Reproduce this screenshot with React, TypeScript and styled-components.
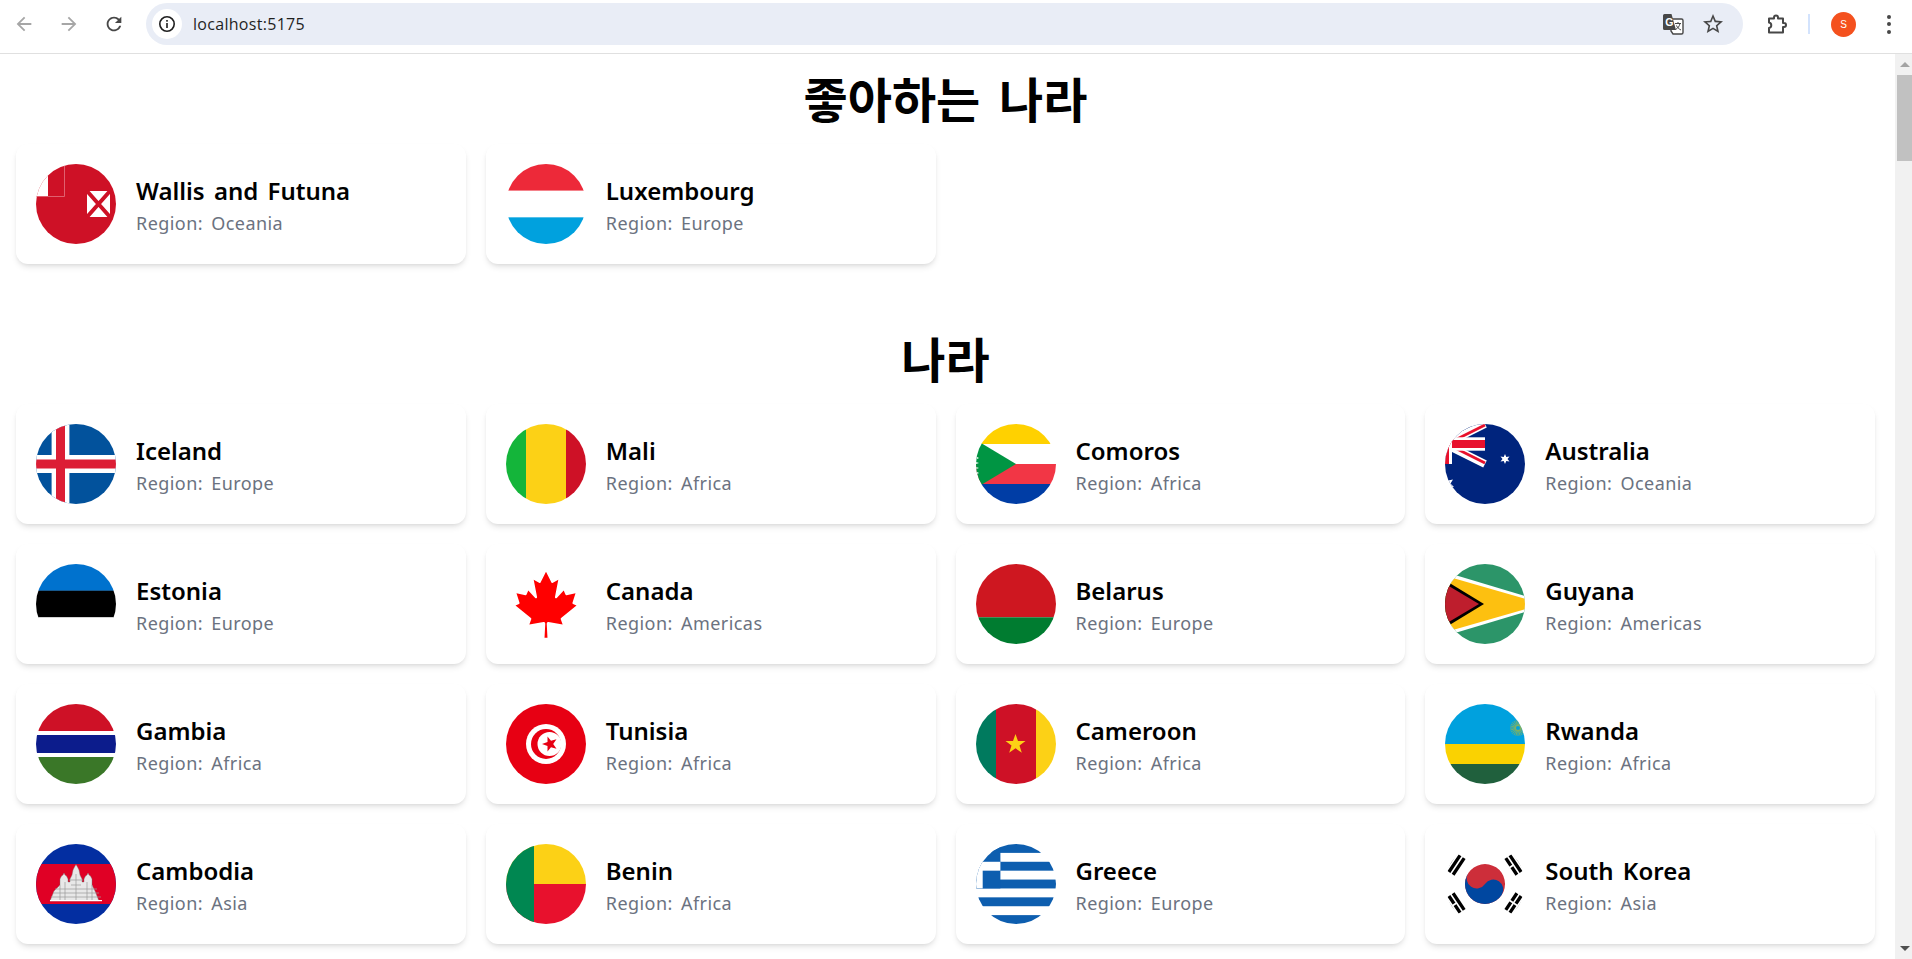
import { ReactNode } from "react";
import styled, { createGlobalStyle } from "styled-components";

const GlobalStyle = createGlobalStyle`
    html, body {
        margin: 0;
        height: 100%;
        overflow: hidden;
        background: #fff;
    }
`;

const Window = styled.div`
    display: flex;
    flex-direction: column;
    height: 959px;
    overflow: hidden;
`;

const Toolbar = styled.div`
    display: flex;
    align-items: center;
    height: 48px;
    flex-shrink: 0;
    padding: 0 0 5px 1px;
    background: #fff;
    border-bottom: 1px solid #e0e0e0;
`;

const NavButton = styled.div`
    display: flex;
    align-items: center;
    justify-content: center;
    width: 45px;
    height: 48px;
`;

const Omnibox = styled.div`
    display: flex;
    align-items: center;
    width: 1597px;
    height: 42px;
    margin-left: 10px;
    padding-left: 6px;
    box-sizing: border-box;
    border-radius: 21px;
    background: #e9edf6;
`;

const InfoBadge = styled.div`
    display: flex;
    align-items: center;
    justify-content: center;
    width: 30px;
    height: 30px;
    border-radius: 50%;
    background: #fff;
`;

const Url = styled.span`
    flex: 1;
    margin-left: 11px;
    font-family: "Open Sans", sans-serif;
    font-size: 16px;
    letter-spacing: 0.3px;
    color: #1f1f1f;
`;

const OmniAction = styled.div`
    display: flex;
    align-items: center;
    justify-content: center;
    width: 40px;
    height: 40px;
`;

const OmniEnd = styled.div`
    width: 10px;
`;

const ExtensionButton = styled.div`
    display: flex;
    align-items: center;
    justify-content: center;
    width: 40px;
    margin-left: 14px;
`;

const Divider = styled.div`
    width: 2px;
    height: 20px;
    margin-left: 11px;
    background: #d3e3fd;
`;

const Avatar = styled.div`
    display: flex;
    align-items: center;
    justify-content: center;
    width: 25px;
    height: 25px;
    margin-left: 21px;
    border-radius: 50%;
    background: #f4511e;
    color: #fff;
    font-family: "Liberation Sans", sans-serif;
    font-size: 10px;
`;

const Kebab = styled.div`
    display: flex;
    flex-direction: column;
    gap: 3.5px;
    margin-left: 31px;
`;

const KebabDot = styled.span`
    width: 4px;
    height: 4px;
    border-radius: 50%;
    background: #474747;
`;

const Viewport = styled.div`
    display: flex;
    flex: 1;
    min-height: 0;
`;

const Page = styled.main`
    flex: 1;
    min-width: 0;
    padding: 7px 20px 0 16px;
    overflow: hidden;
    font-family: "Noto Sans", "Noto Sans CJK KR", sans-serif;
`;

const Section = styled.section`
    margin-bottom: 57px;
`;

const Title = styled.h1`
    margin: 0 0 11px;
    font-family: "Noto Sans CJK KR", sans-serif;
    font-size: 48px;
    line-height: 72px;
    font-weight: 700;
    word-spacing: 8px;
    text-align: center;
    color: #000;
`;

const Grid = styled.div`
    display: grid;
    grid-template-columns: repeat(4, 1fr);
    gap: 20px;
`;

const Card = styled.article`
    display: flex;
    align-items: center;
    gap: 20px;
    height: 120px;
    padding: 0 20px;
    box-sizing: border-box;
    border-radius: 12px;
    background: #fff;
    box-shadow: 0 4px 6px -1px rgba(0, 0, 0, 0.1), 0 2px 4px -2px rgba(0, 0, 0, 0.1);
`;

const FlagCircle = styled.div`
    width: 80px;
    height: 80px;
    flex-shrink: 0;
    border-radius: 50%;
    overflow: hidden;

    svg {
        display: block;
        width: 80px;
        height: 80px;
    }
`;

const CardText = styled.div`
    padding-top: 3px;
`;

const Name = styled.h2`
    margin: 0;
    font-size: 24px;
    line-height: 32px;
    font-weight: 600;
    word-spacing: 3px;
    color: #000;
`;

const Region = styled.p`
    margin: 2px 0 0;
    font-size: 18px;
    line-height: 28px;
    letter-spacing: 0.45px;
    word-spacing: 3px;
    color: #6b7280;
`;

const Scrollbar = styled.div`
    display: flex;
    flex-direction: column;
    align-items: flex-end;
    width: 17px;
    flex-shrink: 0;
    background: #f1f1f1;
`;

const ScrollArrow = styled.div<{ $down?: boolean; $color: string }>`
    display: flex;
    align-items: center;
    justify-content: center;
    width: 15px;
    height: 21px;

    &::before {
        content: "";
        border-left: 5px solid transparent;
        border-right: 5px solid transparent;
        ${props => props.$down ? `border-top: 5px solid ${props.$color};` : `border-bottom: 5px solid ${props.$color};`}
    }
`;

const ScrollThumb = styled.div`
    width: 15px;
    height: 86px;
    background: #c1c1c1;
`;

const ScrollTrack = styled.div`
    flex: 1;
`;

function Icon({ d, color, size }: { d: string; color: string; size: number }) {
    return <svg width={size} height={size} viewBox="0 0 24 24" fill={color}><path d={d} /></svg>;
}

const TranslateIcon = () => (
    <svg width="22" height="22" viewBox="0 0 22 22">
        <path d="M9 6h10.500a1.500 1.500 0 0 1 1.500 1.500v12a1.500 1.500 0 0 1-1.500 1.500H11l-2-3z" fill="#fff" stroke="#474747" strokeWidth="1.400" />
        <path d="M2.500 1h7l4.500 16H2.500A1.500 1.500 0 0 1 1 15.500v-13A1.500 1.500 0 0 1 2.500 1z" fill="#474747" />
        <text x="3.200" y="13" fontFamily="Liberation Sans, sans-serif" fontWeight="700" fontSize="10.500" fill="#fff">G</text>
        <path d="M13 10.500h6M16 9v1.500M18 10.500c-.6 3-2.400 5-4.500 6M14.500 12.500c.8 2 2.400 3.500 4.500 4.500" fill="none" stroke="#474747" strokeWidth="1" />
    </svg>
);

const PuzzleIcon = () => (
    <svg width="24" height="24" viewBox="0 0 24 24">
        <path d="M4 6.500h5v-1a2 2 0 0 1 4 0v1h5v4.500h1a2 2 0 0 1 0 4h-1v5.500H4v-4.500a2.800 2.800 0 0 0 0-5.500z" fill="none" stroke="#474747" strokeWidth="2" strokeLinejoin="round" />
    </svg>
);

const WallisFlag = () => (
    <svg viewBox="0 0 80 80">
        <rect width="80" height="80" fill="#ce1126" />
        <rect width="12" height="32" fill="#fff" />
        <path d="M0 32.500h28.500V0" fill="none" stroke="#e0606f" strokeWidth="1" />
        <rect x="51" y="27" width="23" height="26" fill="#fff" />
        <path d="M51 27l23 26M74 27L51 53" stroke="#ce1126" strokeWidth="4" />
    </svg>
);

const HorizontalFlag = ({ colors }: { colors: string[] }) => (
    <svg viewBox="0 0 80 80">
        {colors.map((color, i) => (
            <rect key={i} y={(80 / colors.length) * i} width="80" height={80 / colors.length + 0.2} fill={color} />
        ))}
    </svg>
);

const BelarusFlag = () => (
    <svg viewBox="0 0 80 80">
        <rect width="80" height="53.300" fill="#ce1720" />
        <rect y="53.300" width="80" height="26.700" fill="#007c30" />
    </svg>
);

const VerticalFlag = ({ colors }: { colors: string[] }) => (
    <svg viewBox="0 0 80 80">
        <rect width="20" height="80" fill={colors[0]} />
        <rect x="20" width="40" height="80" fill={colors[1]} />
        <rect x="60" width="20" height="80" fill={colors[2]} />
        {colors[3] && <polygon points="39.500,30 42,37 49.500,37 43.500,41.500 45.800,48.800 39.500,44.300 33.200,48.800 35.500,41.500 29.500,37 37,37" fill={colors[3]} />}
    </svg>
);

const IcelandFlag = () => (
    <svg viewBox="0 0 80 80">
        <rect width="80" height="80" fill="#02529c" />
        <rect y="31" width="80" height="18" fill="#fff" />
        <rect x="15.600" width="17.800" height="80" fill="#fff" />
        <rect y="35.500" width="80" height="9" fill="#dc1e35" />
        <rect x="20" width="9" height="80" fill="#dc1e35" />
    </svg>
);

const ComorosFlag = () => (
    <svg viewBox="0 0 80 80">
        <rect width="80" height="20" fill="#ffd100" />
        <rect y="20" width="80" height="20" fill="#fff" />
        <rect y="40" width="80" height="20" fill="#f23645" />
        <rect y="60" width="80" height="20" fill="#003da5" />
        <polygon points="-26.700,0 40,40 -26.700,80" fill="#009543" />
        <path d="M1 33l2 1-2 1zM0 38l3 1-3 1zM0 43l3 1-3 1zM1 48l2 1-2 1z" fill="#fff" />
    </svg>
);

const AustraliaFlag = () => (
    <svg viewBox="0 0 80 80">
        <rect width="80" height="80" fill="#00247d" />
        <path d="M0 20L40 0M0 20l40 20" stroke="#fff" strokeWidth="8" />
        <path d="M0 21L40 1M0 19l40 20" stroke="#e8112d" strokeWidth="2.800" />
        <rect y="13.300" width="40" height="13.400" fill="#fff" />
        <rect y="16" width="40" height="8" fill="#e8112d" />
        <rect x="-7" width="14" height="40" fill="#fff" />
        <rect x="-4" width="8" height="40" fill="#e8112d" />
        <polygon points="60,30 61.300,33 64.500,32.500 62.500,35 64.500,37.600 61.300,37 60,40 58.700,37 55.500,37.600 57.500,35 55.500,32.500 58.700,33" fill="#fff" />
        <polygon points="1,52 3,56.500 8,55.500 5.500,59.500 9,63 4,63.500 3,68 0,65 -3,60" fill="#fff" />
    </svg>
);

const CanadaFlag = () => (
    <svg viewBox="0 0 80 80">
        <rect width="80" height="80" fill="#fff" />
        <path
            transform="translate(40 40.500) scale(0.0164)"
            fill="#f00"
            d="m-90 2030 45-863a95 95 0 0 0-111-98l-859 151 116-320a65 65 0 0 0-20-73l-941-762 212-99a65 65 0 0 0 34-79l-186-572 542 115a65 65 0 0 0 73-38l105-247 423 454a65 65 0 0 0 111-57l-204-1052 327 189a65 65 0 0 0 91-27l332-652 332 652a65 65 0 0 0 91 27l327-189-204 1052a65 65 0 0 0 111 57l423-454 105 247a65 65 0 0 0 73 38l542-115-186 572a65 65 0 0 0 34 79l212 99-941 762a65 65 0 0 0-20 73l116 320-859-151a95 95 0 0 0-111 98l45 863z"
        />
    </svg>
);

const GuyanaFlag = () => (
    <svg viewBox="0 0 80 80">
        <rect width="80" height="80" fill="#2c9569" />
        <polygon points="-26.700,0 106.700,40 -26.700,80" fill="#fff" />
        <polygon points="-26.700,4 98,40 -26.700,76" fill="#fdc010" />
        <polygon points="-26.700,0 39,40 -26.700,80" fill="#000" />
        <polygon points="-26.700,4 34,40 -26.700,76" fill="#be1e2d" />
    </svg>
);

const GambiaFlag = () => (
    <svg viewBox="0 0 80 80">
        <rect width="80" height="27" fill="#ce1126" />
        <rect y="27" width="80" height="4" fill="#fff" />
        <rect y="31" width="80" height="18" fill="#0c1c8c" />
        <rect y="49" width="80" height="4" fill="#fff" />
        <rect y="53" width="80" height="27" fill="#3a7728" />
    </svg>
);

const TunisiaFlag = () => (
    <svg viewBox="0 0 80 80">
        <rect width="80" height="80" fill="#e70013" />
        <circle cx="40" cy="40" r="20" fill="#fff" />
        <circle cx="40" cy="40" r="15" fill="#e70013" />
        <circle cx="43.500" cy="40" r="12" fill="#fff" />
        <polygon points="36,40 41.500,38 41.500,32.500 45,36.800 50.500,35.200 47.200,40 50.500,44.800 45,43.200 41.500,47.500 41.500,42" fill="#e70013" />
    </svg>
);

const RwandaFlag = () => {
    const rays = Array.from({ length: 24 }, (_, i) => (i * Math.PI) / 12);

    return (
        <svg viewBox="0 0 80 80">
            <rect width="80" height="40" fill="#00a1de" />
            <rect y="40" width="80" height="20" fill="#fad201" />
            <rect y="60" width="80" height="20" fill="#20603d" />
            {rays.map((angle, i) => (
                <line
                    key={i}
                    x1={73 + Math.cos(angle) * 2}
                    y1={24 + Math.sin(angle) * 2}
                    x2={73 + Math.cos(angle) * 8}
                    y2={24 + Math.sin(angle) * 8}
                    stroke="#e5be01"
                    strokeWidth="0.500"
                />
            ))}
        </svg>
    );
};

const CambodiaFlag = () => (
    <svg viewBox="0 0 80 80">
        <rect width="80" height="80" fill="#032ea1" />
        <rect y="20" width="80" height="40" fill="#e00025" />
        <path d="M24 41v-6l1.500-3 1.500-1 1-2 1 2 1.500 1 1.500 3v3h2v-3l2-4 1-5 1.500-3 1.500-2.500 1.500 2.500 1.500 3 1 5 2 4v3h2v-3l1.500-3 1.500-1 1-2 1 2 1.500 1 1.500 3v6l3 6 4 10H14l4-10z" fill="#e8e8e8" stroke="#777" strokeWidth="0.400" />
        <path d="M19 45h42M17 49h46M15 53h50M29 38v19M51 38v19M40 30v27M24 41v16M56 41v16M35 41h10M33 36h14" fill="none" stroke="#999" strokeWidth="0.700" />
        <rect x="14" y="56" width="52" height="1.200" fill="#fff" />
    </svg>
);

const BeninFlag = () => (
    <svg viewBox="0 0 80 80">
        <rect width="80" height="40" fill="#fcd116" />
        <rect y="40" width="80" height="40" fill="#e8112d" />
        <rect width="28" height="80" fill="#008751" />
    </svg>
);

const GreeceFlag = () => (
    <svg viewBox="0 0 80 80">
        <rect width="80" height="80" fill="#fff" />
        {[0, 2, 4, 6, 8].map(i => <rect key={i} y={i * 8.890} width="80" height="8.890" fill="#0d5eaf" />)}
        <rect x="-20" width="44.400" height="44.400" fill="#0d5eaf" />
        <rect x="-20" y="17.780" width="44.400" height="8.890" fill="#fff" />
        <rect x="-2.200" width="8.890" height="44.400" fill="#fff" />
    </svg>
);

const KoreaFlag = () => {
    const bars = (offset: number) => (
        <g stroke="#000" strokeWidth="2">
            <path d={`M-6 ${offset - 3}H6M-6 ${offset}H6M-6 ${offset + 3}H6`} />
        </g>
    );

    return (
        <svg viewBox="-24 -24 48 48">
            <rect x="-24" y="-24" width="48" height="48" fill="#fff" />
            <g transform="rotate(-56.310)">
                {bars(-22)}
                {bars(22)}
                <path stroke="#fff" d="M0 17v10" />
                <circle r="12" fill="#cd2e3a" />
                <path fill="#0047a0" d="M0-12A6 6 0 0 0 0 0A6 6 0 0 1 0 12A12 12 0 0 1 0-12Z" />
            </g>
            <g transform="rotate(-123.690)">
                {bars(-22)}
                {bars(22)}
                <path stroke="#fff" d="M0-23.500v3M0 17v3.500M0 23.500v3" />
            </g>
        </svg>
    );
};

type Country = { name: string; region: string; flag: ReactNode };

const favorites: Country[] = [
    { name: "Wallis and Futuna", region: "Oceania", flag: <WallisFlag /> },
    { name: "Luxembourg", region: "Europe", flag: <HorizontalFlag colors={["#ed2939", "#fff", "#00a1de"]} /> },
];

const countries: Country[] = [
    { name: "Iceland", region: "Europe", flag: <IcelandFlag /> },
    { name: "Mali", region: "Africa", flag: <VerticalFlag colors={["#14b53a", "#fcd116", "#ce1126"]} /> },
    { name: "Comoros", region: "Africa", flag: <ComorosFlag /> },
    { name: "Australia", region: "Oceania", flag: <AustraliaFlag /> },
    { name: "Estonia", region: "Europe", flag: <HorizontalFlag colors={["#0072ce", "#000", "#fff"]} /> },
    { name: "Canada", region: "Americas", flag: <CanadaFlag /> },
    { name: "Belarus", region: "Europe", flag: <BelarusFlag /> },
    { name: "Guyana", region: "Americas", flag: <GuyanaFlag /> },
    { name: "Gambia", region: "Africa", flag: <GambiaFlag /> },
    { name: "Tunisia", region: "Africa", flag: <TunisiaFlag /> },
    { name: "Cameroon", region: "Africa", flag: <VerticalFlag colors={["#007a5e", "#ce1126", "#fcd116", "#fcd116"]} /> },
    { name: "Rwanda", region: "Africa", flag: <RwandaFlag /> },
    { name: "Cambodia", region: "Asia", flag: <CambodiaFlag /> },
    { name: "Benin", region: "Africa", flag: <BeninFlag /> },
    { name: "Greece", region: "Europe", flag: <GreeceFlag /> },
    { name: "South Korea", region: "Asia", flag: <KoreaFlag /> },
];

function CountryCard({ name, region, flag }: Country) {
    return (
        <Card>
            <FlagCircle>{flag}</FlagCircle>
            <CardText>
                <Name>{name}</Name>
                <Region>Region: {region}</Region>
            </CardText>
        </Card>
    );
}

export default function App() {
    return (
        <Window>
            <GlobalStyle />
            <Toolbar>
                <NavButton><Icon size={22} color="#a6a6a6" d="M20 11H7.830l5.590-5.590L12 4l-8 8 8 8 1.410-1.410L7.830 13H20v-2z" /></NavButton>
                <NavButton><Icon size={22} color="#a6a6a6" d="M12 4l-1.410 1.410L16.170 11H4v2h12.170l-5.580 5.590L12 20l8-8z" /></NavButton>
                <NavButton><Icon size={22} color="#474747" d="M17.650 6.350C16.200 4.900 14.210 4 12 4c-4.420 0-7.990 3.580-7.990 8s3.570 8 7.990 8c3.730 0 6.840-2.550 7.730-6h-2.080c-.82 2.330-3.040 4-5.650 4-3.310 0-6-2.690-6-6s2.690-6 6-6c1.660 0 3.140.69 4.220 1.780L13 11h7V4l-2.350 2.350z" /></NavButton>
                <Omnibox>
                    <InfoBadge>
                        <svg width="18" height="18" viewBox="0 0 18 18">
                            <circle cx="9" cy="9" r="7.200" fill="none" stroke="#1f1f1f" strokeWidth="1.600" />
                            <rect x="8.200" y="8" width="1.600" height="5" fill="#1f1f1f" />
                            <rect x="8.200" y="5" width="1.600" height="1.700" fill="#1f1f1f" />
                        </svg>
                    </InfoBadge>
                    <Url>localhost:5175</Url>
                    <OmniAction><TranslateIcon /></OmniAction>
                    <OmniAction><Icon size={24} color="#474747" d="M22 9.240l-7.190-.62L12 2 9.190 8.630 2 9.240l5.460 4.730L5.820 21 12 17.270 18.180 21l-1.630-7.030L22 9.240zM12 15.400l-3.760 2.270 1-4.280-3.320-2.880 4.380-.38L12 6.100l1.710 4.040 4.380.38-3.320 2.880 1 4.280L12 15.400z" /></OmniAction>
                    <OmniEnd />
                </Omnibox>
                <ExtensionButton><PuzzleIcon /></ExtensionButton>
                <Divider />
                <Avatar>S</Avatar>
                <Kebab><KebabDot /><KebabDot /><KebabDot /></Kebab>
            </Toolbar>
            <Viewport>
                <Page>
                    <Section>
                        <Title>좋아하는 나라</Title>
                        <Grid>{favorites.map(country => <CountryCard key={country.name} {...country} />)}</Grid>
                    </Section>
                    <Section>
                        <Title>나라</Title>
                        <Grid>{countries.map(country => <CountryCard key={country.name} {...country} />)}</Grid>
                    </Section>
                </Page>
                <Scrollbar>
                    <ScrollArrow $color="#a3a3a3" />
                    <ScrollThumb />
                    <ScrollTrack />
                    <ScrollArrow $down $color="#505050" />
                </Scrollbar>
            </Viewport>
        </Window>
    );
}
